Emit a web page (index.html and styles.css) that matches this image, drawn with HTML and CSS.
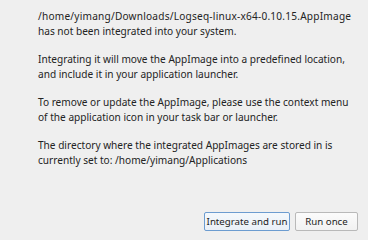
FILE: index.html
```html
<!DOCTYPE html>
<html lang="en">
<head>
    <meta charset="UTF-8">
    <title>AppImageLauncher</title>
    <link rel="stylesheet" href="styles.css">
</head>
<body>
    <div class="dialog">
        <div class="message">
            <p><span class="path">/home/yimang/Downloads/Logseq-linux-x64-0.10.15.AppImage</span><br>has not been integrated into your system.</p>
            <p>Integrating it will move the AppImage into a predefined location,<br>and include it in your application launcher.</p>
            <p>To remove or update the AppImage, please use the context menu<br>of the application icon in your task bar or launcher.</p>
            <p>The directory where the integrated AppImages are stored in is<br>currently set to: /home/yimang/Applications</p>
        </div>
        <div class="buttons">
            <button class="btn btn-default">Integrate and run</button>
            <button class="btn">Run once</button>
        </div>
    </div>
</body>
</html>
```

FILE: styles.css
```css
html, body {
    margin: 0;
    height: 100%;
}
body {
    background-color: #efefef;
    color: #232323;
    font-family: "Noto Sans", sans-serif;
    font-size: 10.1px;
}
.dialog {
    height: 100%;
    box-sizing: border-box;
    padding: 9px 10px 9px 38px;
    display: flex;
    flex-direction: column;
}
.message {
    flex: 1;
}
.message p {
    margin: 0 0 14px 0;
    line-height: 14.5px;
    white-space: nowrap;
}
.path {
    letter-spacing: 0.22px;
}
.buttons {
    display: flex;
    justify-content: flex-end;
    gap: 5px;
}
.btn {
    font-family: "Noto Sans", sans-serif;
    font-size: 9.7px;
    color: #232323;
    height: 19px;
    padding: 0;
    border: 1px solid #b9b9b9;
    border-radius: 2px;
    background: linear-gradient(#fbfbfb, #f2f2f2);
    width: 63px;
    white-space: nowrap;
}
.btn-default {
    border-color: #6c9cd0;
    background: linear-gradient(#f4f8fc, #eaf0f7);
    width: 86px;
}
```
